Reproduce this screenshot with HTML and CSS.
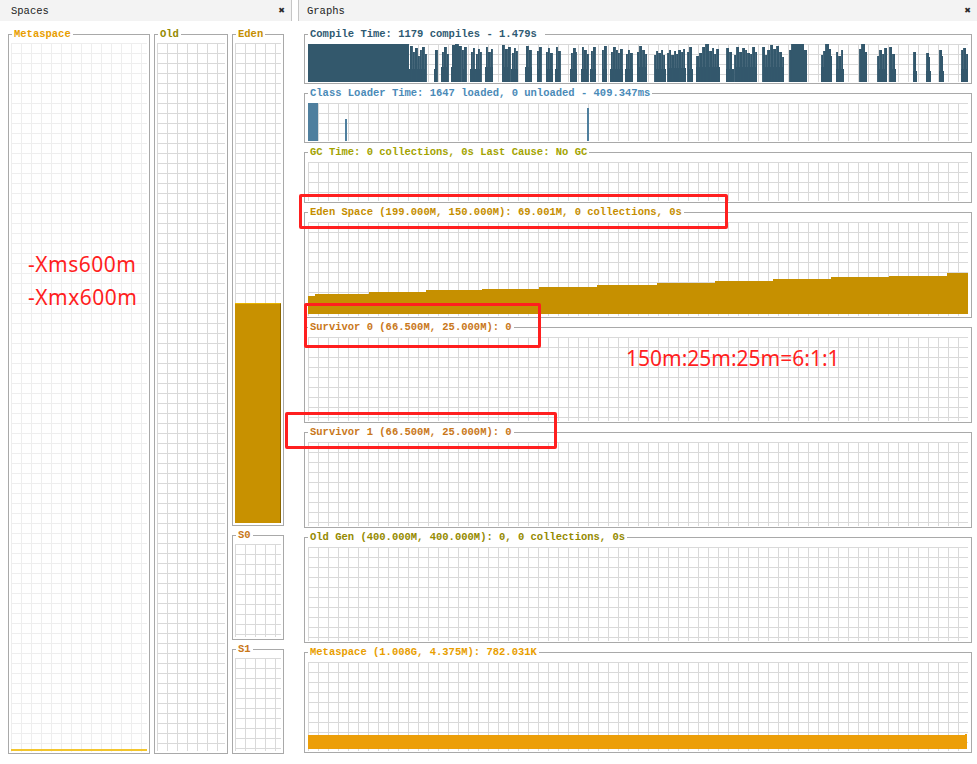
FILE: index.html
```html
<!DOCTYPE html>
<html>
<head>
<meta charset="utf-8">
<title>Visual GC</title>
<link rel="stylesheet" href="styles.css">
</head>
<body>
<div class="app">
  <section class="pane spaces">
    <div class="hdr"><span class="hdr-title">Spaces</span><span class="close">&#x2716;</span></div>
    <div class="spaces-body">
      <div class="tbox col-meta">
        <span class="ttl c-meta">Metaspace</span>
        <div class="grid grid-light meta-grid"><div class="meta-line"></div></div>
      </div>
      <div class="tbox col-old">
        <span class="ttl c-old">Old</span>
        <div class="grid"></div>
      </div>
      <div class="col-young">
        <div class="tbox box-eden">
          <span class="ttl c-eden">Eden</span>
          <div class="grid bar-grid"><div class="eden-bar" style="height:220px"></div></div>
        </div>
        <div class="tbox box-surv">
          <span class="ttl c-surv">S0</span>
          <div class="grid"></div>
        </div>
        <div class="tbox box-surv">
          <span class="ttl c-surv">S1</span>
          <div class="grid"></div>
        </div>
      </div>
    </div>
  </section>
  <div class="sep"></div>
  <section class="pane graphs">
    <div class="hdr"><span class="hdr-title">Graphs</span><span class="close">&#x2716;</span></div>
    <div class="graphs-body">
      <div class="tbox gbox h-compile">
        <span class="ttl c-compile">Compile Time: 1179 compiles - 1.479s </span>
        <div class="grid">
          <svg class="chart" viewBox="0 0 659 37" preserveAspectRatio="none" shape-rendering="crispEdges">
            <g fill="#33586c">
              <path d="M0 37V0h101V37z"/>
              <path d="M101 37V24h17V37zM126 37V24h3V37zM133 37V22h7V37zM143 37V22h10V37zM154 37V24h4V37zM162 37V24h11V37zM177 37V22h8V37zM194 37V22h8V37zM203 37V24h7V37zM217 37V22h7V37zM229 37V24h4V37zM238 37V24h7V37zM247 37V24h5V37zM262 37V24h7V37zM273 37V24h7V37zM282 37V24h6V37zM294 37V24h5V37zM302 37V24h13V37zM317 37V24h8V37zM329 37V22h9V37zM346 37V24h11V37zM359 37V23h18V37zM379 37V24h5V37zM387 37V22h24V37zM417 37V24h8V37zM426 37V22h22V37zM454 37V22h21V37zM481 37V20h17V37zM512 37V22h11V37zM527 37V24h8V37zM551 37V22h7V37zM569 37V24h9V37zM581 37V24h6V37zM604 37V26h4V37zM617 37V26h5V37zM630 37V26h5V37zM652 37V24h7V37z"/>
              <path stroke="#33586c" stroke-width="0.9" d="M102 37V2h2V37zM105 37V8h1V37zM107 37V4h2V37zM110 37V12h1V37zM112 37V6h1V37zM114 37V3h2V37zM117 37V10h1V37zM127 37V6h2V37zM134 37V8h1V37zM136 37V3h2V37zM139 37V10h1V37zM144 37V1h3V37zM147 37V0h3V37zM150 37V2h3V37zM154 37V6h1V37zM156 37V3h2V37zM163 37V8h1V37zM165 37V4h1V37zM168 37V10h1V37zM170 37V5h1V37zM172 37V8h1V37zM178 37V3h1V37zM180 37V8h2V37zM183 37V5h1V37zM194 37V1h2V37zM197 37V5h2V37zM200 37V3h2V37zM204 37V9h1V37zM206 37V4h1V37zM208 37V7h1V37zM218 37V2h2V37zM221 37V6h2V37zM229 37V7h1V37zM231 37V3h2V37zM238 37V8h1V37zM240 37V4h1V37zM242 37V9h2V37zM248 37V3h1V37zM250 37V7h2V37zM263 37V9h1V37zM265 37V4h2V37zM267 37V8h1V37zM274 37V3h1V37zM276 37V6h2V37zM279 37V10h1V37zM283 37V7h1V37zM285 37V3h2V37zM294 37V6h1V37zM296 37V2h2V37zM303 37V8h1V37zM305 37V3h2V37zM308 37V6h1V37zM310 37V9h1V37zM312 37V5h2V37zM318 37V10h1V37zM320 37V6h1V37zM322 37V9h2V37zM329 37V8h1V37zM331 37V2h2V37zM334 37V6h2V37zM337 37V10h1V37zM346 37V11h1V37zM348 37V7h1V37zM350 37V9h2V37zM353 37V6h1V37zM355 37V11h1V37zM359 37V9h1V37zM361 37V6h1V37zM363 37V11h2V37zM366 37V7h1V37zM368 37V10h1V37zM370 37V6h2V37zM373 37V8h1V37zM375 37V5h1V37zM379 37V8h1V37zM381 37V3h2V37zM388 37V12h2V37zM391 37V9h2V37zM394 37V3h2V37zM397 37V0h3V37zM401 37V7h2V37zM404 37V4h1V37zM406 37V10h1V37zM408 37V5h2V37zM418 37V4h2V37zM421 37V8h2V37zM426 37V11h1V37zM428 37V3h2V37zM431 37V8h2V37zM434 37V4h2V37zM437 37V6h1V37zM439 37V9h2V37zM442 37V10h1V37zM444 37V3h2V37zM447 37V8h1V37zM454 37V3h2V37zM457 37V11h1V37zM459 37V6h2V37zM462 37V1h2V37zM465 37V5h2V37zM468 37V2h2V37zM471 37V8h2V37zM474 37V13h1V37zM481 37V6h2V37zM483 37V0h12V37zM495 37V6h3V37zM513 37V11h1V37zM515 37V7h2V37zM517 37V0h3V37zM520 37V5h2V37zM522 37V12h1V37zM528 37V8h1V37zM530 37V12h2V37zM533 37V6h1V37zM551 37V5h2V37zM553 37V0h3V37zM556 37V8h2V37zM569 37V12h1V37zM571 37V6h2V37zM574 37V10h1V37zM576 37V4h2V37zM581 37V3h2V37zM584 37V10h2V37zM605 37V8h2V37zM618 37V9h2V37zM620 37V13h1V37zM631 37V6h2V37zM633 37V12h1V37zM653 37V6h1V37zM655 37V4h2V37zM658 37V10h1V37z"/>
            </g>
          </svg>
        </div>
      </div>
      <div class="tbox gbox h-compile">
        <span class="ttl c-class">Class Loader Time: 1647 loaded, 0 unloaded - 409.347ms</span>
        <div class="grid">
          <svg class="chart" viewBox="0 0 659 37" preserveAspectRatio="none" shape-rendering="crispEdges">
            <path fill="#4f7f9e" d="M0 37V0h10V37zM37 37V16h2V37zM279 37V5h2V37z"/>
          </svg>
        </div>
      </div>
      <div class="tbox gbox h-gc">
        <span class="ttl c-gc">GC Time: 0 collections, 0s Last Cause: No GC</span>
        <div class="grid"></div>
      </div>
      <div class="tbox gbox h-big">
        <span class="ttl c-eden">Eden Space (199.000M, 150.000M): 69.001M, 0 collections, 0s</span>
        <div class="grid">
          <svg class="chart" viewBox="0 0 659 94" preserveAspectRatio="none" shape-rendering="crispEdges">
            <path fill="#c69000" d="M0 92V74h7V72h54V70h57V68h56V66.5h57V64.5h58V62.5h59V60.5h58V58.5h58V57h58V55h58V53.5h58V51h21V92z"/>
          </svg>
        </div>
      </div>
      <div class="tbox gbox h-mid">
        <span class="ttl c-surv">Survivor 0 (66.500M, 25.000M): 0</span>
        <div class="grid"></div>
      </div>
      <div class="tbox gbox h-mid">
        <span class="ttl c-surv">Survivor 1 (66.500M, 25.000M): 0</span>
        <div class="grid"></div>
      </div>
      <div class="tbox gbox h-big">
        <span class="ttl c-old">Old Gen (400.000M, 400.000M): 0, 0 collections, 0s</span>
        <div class="grid"></div>
      </div>
      <div class="tbox gbox h-meta">
        <span class="ttl c-meta">Metaspace (1.008G, 4.375M): 782.031K</span>
        <div class="grid">
          <svg class="chart" viewBox="0 0 659 89" preserveAspectRatio="none" shape-rendering="crispEdges">
            <path fill="#ec9e08" d="M0 87V73h656V72h2V87z"/>
          </svg>
        </div>
      </div>
    </div>
  </section>
</div>

<div class="note note-xms">-Xms600m</div>
<div class="note note-xmx">-Xmx600m</div>
<div class="note note-ratio">150m:25m:25m=6:1:1</div>
<div class="mark mark-eden"></div>
<div class="mark mark-s0"></div>
<div class="mark mark-s1"></div>
</body>
</html>
```

FILE: styles.css
```css
* { box-sizing: border-box; }

html, body {
  margin: 0;
  padding: 0;
}

body {
  width: 977px;
  height: 764px;
  overflow: hidden;
  background: #ffffff;
  position: relative;
  font-family: "Liberation Mono", "DejaVu Sans Mono", monospace;
}

.app {
  display: flex;
  height: 764px;
}

.pane {
  display: flex;
  flex-direction: column;
}

.spaces {
  width: 292px;
  flex: none;
}

.sep {
  width: 6px;
  flex: none;
}

.graphs {
  flex: 1;
}

.hdr {
  height: 21px;
  flex: none;
  background: #f3f3f3;
  display: flex;
  align-items: center;
  padding-right: 6px;
}

.spaces .hdr {
  border-right: 1px solid #c6c6c6;
  padding-left: 11px;
}

.graphs .hdr {
  border-left: 1px solid #c6c6c6;
  padding-left: 8px;
}

.hdr-title {
  font-size: 10.5px;
  color: #1c1c1c;
}

.close {
  margin-left: auto;
  font-family: "DejaVu Sans", sans-serif;
  font-size: 8px;
  color: #2a2a2a;
}

/* titled boxes */
.tbox {
  position: relative;
  border: 1px solid #a9a9a9;
  padding: 8px 2px 2px 2px;
  display: flex;
  flex-direction: column;
}

.ttl {
  position: absolute;
  top: -7px;
  left: 3px;
  padding: 0 2px;
  background: #ffffff;
  font-size: 10.5px;
  line-height: 13px;
  font-weight: bold;
  white-space: pre;
}

.grid {
  flex: 1;
  position: relative;
  background-color: #ffffff;
  background-image:
    linear-gradient(90deg, #d9d9d9 1px, transparent 1px),
    linear-gradient(#d9d9d9 1px, transparent 1px);
  background-size: 10px 10px;
}

.grid-light {
  background-image:
    linear-gradient(90deg, #eeeeee 1px, transparent 1px),
    linear-gradient(#eeeeee 1px, transparent 1px);
}

/* colours */
.c-meta { color: #e89e00; }
.c-old { color: #958a00; }
.c-eden { color: #c58e00; }
.c-surv { color: #c9781a; }
.c-compile { color: #2f5a72; }
.c-class { color: #4a8ab7; }
.c-gc { color: #a3a300; }

/* spaces */
.spaces-body {
  flex: 1;
  display: flex;
  gap: 4px;
  padding: 13px 0 0 8px;
}

.col-meta {
  width: 142px;
  height: 720px;
  padding-bottom: 1px;
}

.col-old {
  width: 74px;
  height: 720px;
}

.col-young {
  width: 52px;
  display: flex;
  flex-direction: column;
  gap: 9px;
}

.box-eden {
  height: 492px;
}

.box-surv {
  height: 105px;
}

.meta-grid {
  display: flex;
  flex-direction: column;
  justify-content: flex-end;
}

.meta-line {
  height: 2px;
  margin-bottom: 1px;
  background: #f3c52c;
}

.bar-grid {
  display: flex;
  flex-direction: column;
  justify-content: flex-end;
}

.eden-bar {
  background: #c89100;
  border-top: 1px solid #e8b400;
  border-right: 1px solid #8a6500;
}

/* graphs */
.graphs-body {
  flex: 1;
  display: flex;
  flex-direction: column;
  gap: 9px;
  padding: 13px 5px 0 6px;
}

.gbox {
  padding: 9px 3px 1px 3px;
}

.h-compile { height: 50px; }
.h-gc { height: 51px; }
.h-big { height: 106px; }
.h-mid { height: 96px; }
.h-meta { height: 101px; }

.chart {
  display: block;
  width: 100%;
  height: 100%;
}

/* annotations */
.note {
  position: absolute;
  color: #ff1f1f;
  font-family: "Noto Sans", "Open Sans", sans-serif;
  font-size: 21px;
  line-height: 24px;
  white-space: nowrap;
}

.note-xms { left: 28px; top: 252px; letter-spacing: 0.5px; }
.note-xmx { left: 28px; top: 285px; letter-spacing: 0.5px; }
.note-ratio { left: 626px; top: 346px; }

.mark {
  position: absolute;
  border: 3px solid #ff1f1f;
  border-radius: 2px;
}

.mark-eden { left: 299px; top: 194px; width: 429px; height: 35px; }
.mark-s0 { left: 304px; top: 303px; width: 237px; height: 45px; }
.mark-s1 { left: 285px; top: 412px; width: 272px; height: 37px; }
```
